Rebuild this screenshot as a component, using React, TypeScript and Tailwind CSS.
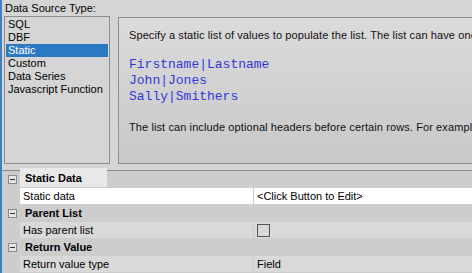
import React from 'react';

const sources = ['SQL', 'DBF', 'Static', 'Custom', 'Data Series', 'Javascript Function'];

const MinusBox = () => (
  <div className="w-[9px] h-[9px] border border-[#8a8a8a] bg-[#e4e4e4] flex items-center justify-center">
    <div className="w-[5px] h-px bg-[#333]" />
  </div>
);

const Category = ({ label, focus = false }: { label: string; focus?: boolean }) => (
  <div className="flex h-[17px] border-b border-[#cdcdcd] bg-[#cdcdcd]">
    <div className="w-[18px] flex items-center justify-center pl-[2px]">
      <MinusBox />
    </div>
    {focus ? (
      <div className="w-[87px] h-[19px] -mt-[3px] bg-[#e8e8e8] pl-[5px] pt-[3px] font-bold leading-[15px]">
        {label}
      </div>
    ) : (
      <div className="pl-[5px] font-bold leading-[16px]">{label}</div>
    )}
  </div>
);

const Prop = ({ name, white = false, children }: { name: string; white?: boolean; children?: React.ReactNode }) => (
  <div className="flex h-[17px] border-b border-[#cdcdcd] bg-[#cdcdcd]">
    <div className="w-[18px]" />
    <div className={`w-[233px] pl-[3px] leading-[16px] ${white ? 'bg-white' : 'bg-[#d9d9d9]'}`}>{name}</div>
    <div className={`flex-1 ml-px pl-[3px] leading-[16px] flex items-center ${white ? 'bg-white' : 'bg-[#d9d9d9]'}`}>
      {children}
    </div>
  </div>
);

export default function App() {
  return (
    <div
      className="w-[472px] h-[273px] overflow-hidden bg-[#d5d5d5] border-l-2 border-[#3f80c4] text-[11px] text-black whitespace-nowrap"
      style={{ fontFamily: '"Liberation Sans", Arial, sans-serif' }}
    >
      <div className="flex items-start h-[164px]">
        <div className="ml-[2px] w-[106px] shrink-0">
          <div className="h-[16px] pt-[2px] pl-px leading-[13px]">Data Source Type:</div>
          <div className="h-[148px] border border-[#8c8c8c] pt-px px-px">
            {sources.map((s) => (
              <div
                key={s}
                className={`h-[13px] leading-[13px] px-[2px] ${s === 'Static' ? 'bg-[#2b79c2] text-white' : ''}`}
              >
                {s}
              </div>
            ))}
          </div>
        </div>
        <div className="ml-[8px] mt-[17px] h-[147px] flex-1 min-w-0 overflow-hidden border border-r-0 border-[#8f8f8f] bg-gradient-to-b from-[#dbdbdb] to-[#c8c8c8] pl-[10px] pt-[11px] text-[#111]">
          <div className="leading-[13px] tracking-[0.1px]">
            Specify a static list of values to populate the list. The list can have one or more columns.
          </div>
          <div
            className="mt-[15px] text-[13px] leading-[16px] text-[#3535e0]"
            style={{ fontFamily: '"Liberation Mono", "Courier New", monospace' }}
          >
            <div>Firstname|Lastname</div>
            <div>John|Jones</div>
            <div>Sally|Smithers</div>
          </div>
          <div className="mt-[16px] leading-[13px] tracking-[0.1px]">
            The list can include optional headers before certain rows. For example:
          </div>
        </div>
      </div>
      <div className="mt-[6px] border-t border-[#8c8c8c]">
        <Category label="Static Data" focus />
        <Prop name="Static data" white>
          &lt;Click Button to Edit&gt;
        </Prop>
        <Category label="Parent List" />
        <Prop name="Has parent list">
          <div className="w-[13px] h-[13px] border border-[#555]" />
        </Prop>
        <Category label="Return Value" />
        <Prop name="Return value type">Field</Prop>
      </div>
    </div>
  );
}
